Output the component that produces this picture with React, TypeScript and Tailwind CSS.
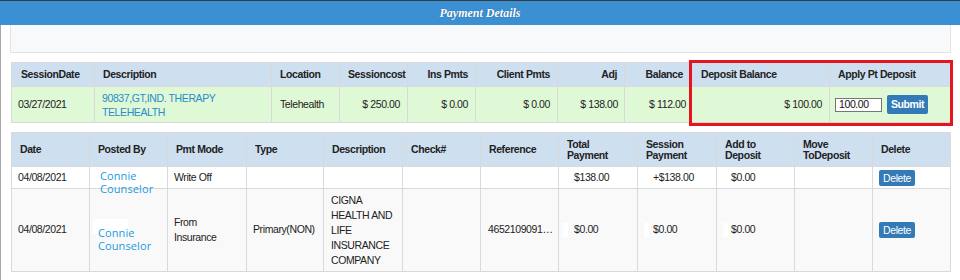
const sessionCols = [83, 177, 68, 68, 68, 82, 67, 66, 139, 121]
const paymentCols = [78, 78, 79, 77, 79, 78, 78, 79, 79, 78, 78, 78]

const sessionHeaders: { label: string; align: 'left' | 'right' }[] = [
  { label: 'SessionDate', align: 'left' },
  { label: 'Description', align: 'left' },
  { label: 'Location', align: 'left' },
  { label: 'Sessioncost', align: 'right' },
  { label: 'Ins Pmts', align: 'right' },
  { label: 'Client Pmts', align: 'right' },
  { label: 'Adj', align: 'right' },
  { label: 'Balance', align: 'right' },
  { label: 'Deposit Balance', align: 'left' },
  { label: 'Apply Pt Deposit', align: 'left' },
]

const paymentHeaders = [
  ['Date'],
  ['Posted By'],
  ['Pmt Mode'],
  ['Type'],
  ['Description'],
  ['Check#'],
  ['Reference'],
  ['Total', 'Payment'],
  ['Session', 'Payment'],
  ['Add to', 'Deposit'],
  ['Move', 'ToDeposit'],
  ['Delete'],
]

const cell = 'border border-[#d9d9d9] align-middle'

function Counselor({ className = '' }: { className?: string }) {
  return (
    <a
      href="#"
      className={`relative z-10 block font-['Open_Sans',sans-serif] text-[11px] leading-[13px] tracking-[0.1px] text-[#229ae0] ${className}`}
    >
      Connie
      <br />
      Counselor
    </a>
  )
}

function Blot({ faint = false }: { faint?: boolean }) {
  return (
    <span
      className={`inline-block h-[14px] w-[5px] align-middle ${faint ? 'bg-white/80' : 'bg-white'}`}
    />
  )
}

function DeleteButton() {
  return (
    <button
      type="button"
      className="h-[16px] w-[36px] rounded-[2px] bg-[#337ab7] text-[10.5px] leading-[16px] text-white"
    >
      Delete
    </button>
  )
}

export default function App() {
  return (
    <div className="relative h-[280px] w-[960px] overflow-hidden bg-white font-['Liberation_Sans',Arial,sans-serif] text-[10.5px] tracking-[-0.4px] text-[#222]">
      <div className="h-px bg-[#3a3a3a]" />
      <div className="flex h-[24px] items-center justify-center bg-[#3b8fd3]">
        <h1 className="font-['Liberation_Serif',serif] text-[12px] font-bold italic tracking-normal text-white [text-shadow:0_0_1px_#1c4f7a]">
          Payment Details
        </h1>
      </div>

      <div className="h-[255px] border-l border-[#a8a8a8]">
        <div className="ml-[9px] h-[28px] w-[941px] border border-t-0 border-[#e3e3e3] bg-[#f8f9fa]" />

        <table className="ml-[10px] mt-[9px] w-[939px] table-fixed border-collapse">
          <colgroup>
            {sessionCols.map((w, i) => (
              <col key={i} style={{ width: w }} />
            ))}
          </colgroup>
          <thead>
            <tr className="h-[24px] bg-[#cee0f0]">
              {sessionHeaders.map((h, i) => (
                <th
                  key={h.label}
                  className={`${cell} font-bold ${h.align === 'right' ? 'pr-[7px] text-right' : 'text-left'} ${
                    i === 0 ? 'pl-[9px]' : i === 8 ? 'pl-[10px]' : 'pl-[8px]'
                  }`}
                >
                  {h.label}
                </th>
              ))}
            </tr>
          </thead>
          <tbody>
            <tr className="h-[36px] bg-[#dff8d5]">
              <td className={`${cell} pl-[6px]`}>03/27/2021</td>
              <td className={`${cell} pl-[7px] leading-[14px] text-[#2a8ccc]`}>
                90837,GT,IND. THERAPY
                <br />
                TELEHEALTH
              </td>
              <td className={`${cell} pl-[8px]`}>Telehealth</td>
              <td className={`${cell} pr-[7px] text-right`}>$ 250.00</td>
              <td className={`${cell} pr-[7px] text-right`}>$ 0.00</td>
              <td className={`${cell} pr-[7px] text-right`}>$ 0.00</td>
              <td className={`${cell} pr-[6px] text-right`}>$ 138.00</td>
              <td className={`${cell} pr-[4px] text-right`}>$ 112.00</td>
              <td className={`${cell} pr-[7px] text-right`}>$ 100.00</td>
              <td className={`${cell} pl-[5px]`}>
                <div className="flex items-center gap-[5px]">
                  <input
                    defaultValue="100.00"
                    className="h-[14px] w-[47px] border border-[#767676] bg-white px-[3px] text-[10.5px] text-[#111] outline-none"
                  />
                  <button
                    type="button"
                    className="h-[19px] w-[41px] rounded-[2px] bg-[#337ab7] text-[10.5px] font-bold text-white"
                  >
                    Submit
                  </button>
                </div>
              </td>
            </tr>
          </tbody>
        </table>

        <table className="ml-[10px] mt-[9px] w-[939px] table-fixed border-collapse">
          <colgroup>
            {paymentCols.map((w, i) => (
              <col key={i} style={{ width: w }} />
            ))}
          </colgroup>
          <thead>
            <tr className="h-[34px] bg-[#cee0f0]">
              {paymentHeaders.map((lines, i) => (
                <th key={i} className={`${cell} pl-[8px] text-left font-bold leading-[11px]`}>
                  {lines.map((l, j) => (
                    <div key={j}>{l}</div>
                  ))}
                </th>
              ))}
            </tr>
          </thead>
          <tbody>
            <tr className="h-[22px] bg-white">
              <td className={`${cell} pl-[6px]`}>04/08/2021</td>
              <td className={`${cell} pl-[10px] align-top`}>
                <div className="h-[21px] pt-[2px]">
                  <Counselor />
                </div>
              </td>
              <td className={`${cell} pl-[6px]`}>Write Off</td>
              <td className={cell} />
              <td className={cell} />
              <td className={cell} />
              <td className={cell} />
              <td className={`${cell} pl-[15px]`}>$138.00</td>
              <td className={`${cell} pl-[15px]`}>+$138.00</td>
              <td className={`${cell} pl-[14px]`}>$0.00</td>
              <td className={cell} />
              <td className={`${cell} pl-[6px]`}>
                <div className="flex items-center">
                  <DeleteButton />
                </div>
              </td>
            </tr>
            <tr className="h-[83px] bg-[#f9f9f9]">
              <td className={`${cell} pl-[6px]`}>04/08/2021</td>
              <td className={`${cell} pl-[8px]`}>
                <div className="relative pt-[18px]">
                  <span className="absolute left-[-5px] top-[11px] h-[15px] w-[35px] bg-white" />
                  <Counselor />
                </div>
              </td>
              <td className={`${cell} pl-[6px] leading-[15px]`}>
                From
                <br />
                Insurance
              </td>
              <td className={`${cell} pl-[6px]`}>Primary(NON)</td>
              <td className={`${cell} pl-[7px] leading-[15px]`}>
                CIGNA
                <br />
                HEALTH AND
                <br />
                LIFE
                <br />
                INSURANCE
                <br />
                COMPANY
              </td>
              <td className={cell} />
              <td className={`${cell} truncate pl-[7px] pr-[3px]`}>4652109091875</td>
              <td className={`${cell} pl-[4px]`}>
                <Blot />
                <span className="ml-[6px]">$0.00</span>
              </td>
              <td className={`${cell} pl-[6px]`}>
                <Blot />
                <span className="ml-[4px]">$0.00</span>
              </td>
              <td className={`${cell} pl-[6px]`}>
                <Blot faint />
                <span className="ml-[3px]">$0.00</span>
              </td>
              <td className={cell} />
              <td className={`${cell} pl-[6px]`}>
                <div className="flex items-center">
                  <DeleteButton />
                </div>
              </td>
            </tr>
          </tbody>
        </table>
      </div>

      <div className="pointer-events-none absolute left-[689px] top-[60px] h-[66px] w-[264px] border-[3px] border-[#e8141d]" />
    </div>
  )
}
